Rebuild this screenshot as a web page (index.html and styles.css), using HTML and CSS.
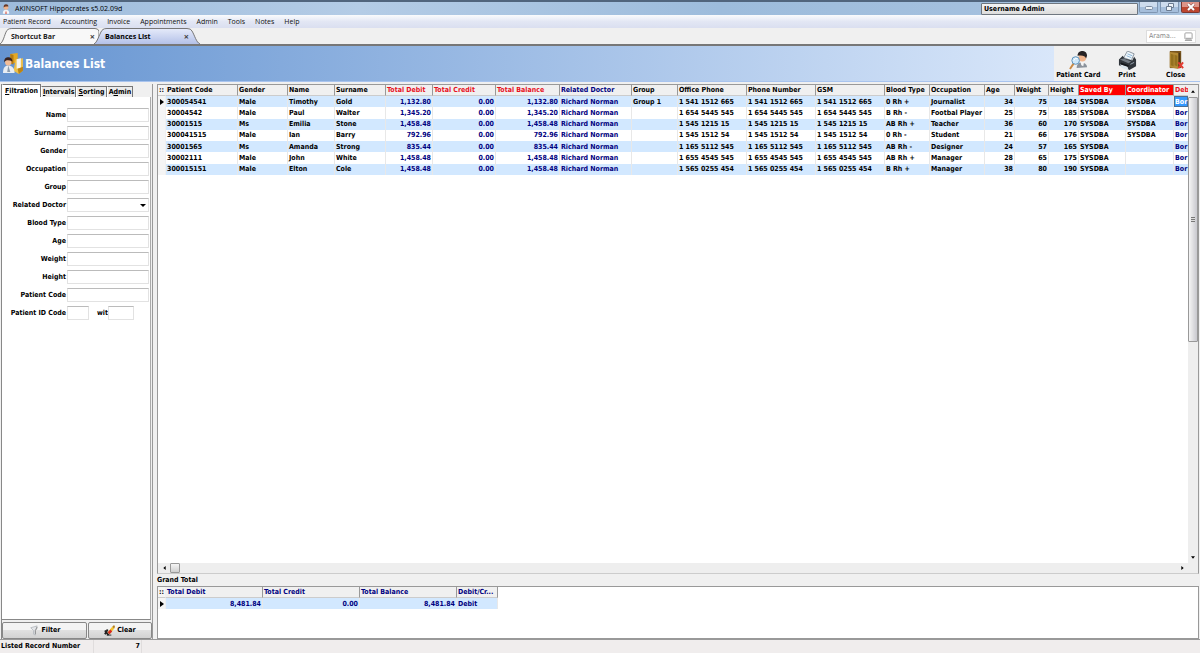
FILE: index.html
```
<!DOCTYPE html>
<html lang="en">
<head>
    <meta charset="UTF-8">
    <meta name="viewport" content="width=device-width, initial-scale=1.0">
    <title>AKINSOFT Hippocrates s5.02.09d</title>
    <link rel="stylesheet" href="styles.css">
</head>
<body>
    <header class="titlebar">
        <svg class="app-icon" viewBox="0 0 10 12">
            <path d="M1 12c0-4 2-5 4-5s4 1 4 5z" fill="#f4f6f8"/>
            <circle cx="5" cy="4" r="3" fill="#f0b48c"/>
            <path d="M2 4c0-3 1-4 3-4s3 1 3 3c-2 0-4-1-6 1z" fill="#6b3a26"/>
            <path d="M5 8l-1 4h2z" fill="#d8432e"/>
        </svg>
        <h1 class="app-title">AKINSOFT Hippocrates s5.02.09d</h1>
        <div class="user-box">Username Admin</div>
        <div class="window-buttons">
            <button class="win-btn" aria-label="Minimize"><svg viewBox="0 0 10 8"><rect x="1.500" y="3.500" width="7" height="3" rx="1" fill="#eef3f8" stroke="#7b8ba0"/></svg></button>
            <button class="win-btn" aria-label="Restore"><svg viewBox="0 0 10 8"><path d="M3.500 .5h5v4h-5z" fill="#eef3f8" stroke="#6b7b90"/><path d="M1.500 3.500h5v4h-5z" fill="#eef3f8" stroke="#6b7b90"/></svg></button>
            <button class="win-btn win-close" aria-label="Close window"><svg viewBox="0 0 10 8"><path d="M2 1l6 6M8 1l-6 6" stroke="#8b4a46" stroke-width="3"/><path d="M2 1l6 6M8 1l-6 6" stroke="#fff" stroke-width="2"/></svg></button>
        </div>
    </header>

    <nav class="menu">
        <a href="#">Patient Record</a>
        <a href="#">Accounting</a>
        <a href="#">Invoice</a>
        <a href="#">Appointments</a>
        <a href="#">Admin</a>
        <a href="#">Tools</a>
        <a href="#">Notes</a>
        <a href="#">Help</a>
    </nav>

    <div class="tabbar">
        <div class="doc-tab">
            <svg class="doc-shape" viewBox="0 0 100 16" preserveAspectRatio="none"><path class="shape" d="M0 16C4 14 5 3 8 1.500Q9 .5 12 .5H96Q99 .5 100 3V16"/></svg>
            <button class="doc-name">Shortcut Bar</button>
            <button class="doc-close" aria-label="Close Shortcut Bar">×</button>
        </div>
        <div class="doc-tab active">
            <svg class="doc-shape" viewBox="0 0 106 16" preserveAspectRatio="none">
                <defs><linearGradient id="tabFill" x1="0" y1="0" x2="0" y2="1"><stop offset="0" stop-color="#e6ebfa"/><stop offset="1" stop-color="#b4c1e8"/></linearGradient></defs>
                <path class="shape" d="M0 16C4 14 6 3 9 1.500Q10 .5 13 .5H93Q97 .5 98 3C101 8 102 14 106 16"/>
            </svg>
            <button class="doc-name">Balances List</button>
            <button class="doc-close" aria-label="Close Balances List">×</button>
        </div>
        <div class="search">
            <input type="text" placeholder="Arama..." aria-label="Search">
            <svg viewBox="0 0 10 10"><rect x="1" y="1" width="8" height="7" rx="1" fill="#fff" stroke="#999"/><path d="M2 7h6M1 9.500h8" stroke="#999"/></svg>
        </div>
    </div>

    <div class="banner">
        <svg class="banner-icon" viewBox="0 0 20 20">
            <path d="M7 1l7-1v9l-7 1z" fill="#e5a823"/>
            <path d="M7 1l3 1v9l-3-1z" fill="#b57a12"/>
            <path d="M12 6l7-1v12l-4 3-5-3z" fill="#edc04b"/>
            <path d="M13 6l4-1v9l-4 1z" fill="#f4f4f0"/>
            <path d="M14 15l5-2v4l-4 3z" fill="#bc8314"/>
            <path d="M0 19c0-5 2-7 5-7s6 2 6 7z" fill="#e8edf3"/>
            <path d="M5 12l-1 6h3z" fill="#8b9cae"/>
            <circle cx="5" cy="9" r="3" fill="#f2bd98"/>
            <path d="M1 9c0-4 2-5 4-5s4 1 4 4c-3-1-6-2-8 1z" fill="#3a2420"/>
        </svg>
        <h2 class="banner-title">Balances List</h2>
        <div class="toolbar">
            <button class="tool">
                <svg viewBox="0 0 20 20">
                    <path d="M8 18c0-4 2-6 5-6s6 2 6 5z" fill="#8b929b"/>
                    <path d="M12 11h4l-1 5-2-1z" fill="#f5f5f5"/>
                    <circle cx="14" cy="7" r="4" fill="#f0b58d"/>
                    <path d="M9 5c0-4 3-5 5-5s5 1 5 5l-1 3c-1-3-4-4-9-3z" fill="#272324"/>
                    <path d="M5 13l-4 6" stroke="#c98a45" stroke-width="2"/>
                    <circle cx="7" cy="10" r="4" fill="#cfe8fa" stroke="#5a8fb8"/>
                    <path d="M5 10q1-3 4-2" stroke="#fff" fill="none"/>
                </svg>
                Patient Card
            </button>
            <button class="tool">
                <svg viewBox="0 0 20 20">
                    <path d="M10 0l7 3-3 7-8-3z" fill="#eef5fa" stroke="#8a949d"/>
                    <path d="M10 3l5 2M9 5l5 2" stroke="#89b3d6"/>
                    <path d="M1 9l4-4 2 3 8 2 2-4 2 3v7l-7 4-11-5z" fill="#30353b"/>
                    <path d="M2 9l4-1 8 3-3 2z" fill="#737b84"/>
                    <path d="M2 14l8 2 1 4-7-2z" fill="#dce5ec"/>
                    <path d="M3 13l8 3" stroke="#15181c" stroke-width="2"/>
                    <path d="M13 14l4-2" stroke="#9aa7b3"/>
                </svg>
                Print
            </button>
            <button class="tool">
                <svg viewBox="0 0 20 20">
                    <path d="M4 0h12v18H4z" fill="#7a561f"/>
                    <path d="M12 2h3v15h-3z" fill="#4a3213"/>
                    <path d="M4 1l9 1v17l-9-2z" fill="#b48a36"/>
                    <path d="M5 3l3 1v12l-3-1zM9 4l3 1v11l-3-1z" fill="#94701f"/>
                    <path d="M13 12l5 6M18 12l-5 6" stroke="#e33a30" stroke-width="2"/>
                </svg>
                Close
            </button>
        </div>
    </div>

    <main class="content">
        <aside class="sidebar">
            <div class="side-tabs">
                <button class="side-tab selected"><u>F</u>iltration</button>
                <button class="side-tab"><u>I</u>ntervals</button>
                <button class="side-tab"><u>S</u>orting</button>
                <button class="side-tab">A<u>d</u>min</button>
            </div>
            <form class="filters" id="filters">
                <div class="field"><label for="name">Name</label><input type="text" id="name"></div>
                <div class="field"><label for="surname">Surname</label><input type="text" id="surname"></div>
                <div class="field"><label for="gender">Gender</label><input type="text" id="gender"></div>
                <div class="field"><label for="occupation">Occupation</label><input type="text" id="occupation"></div>
                <div class="field"><label for="group">Group</label><input type="text" id="group"></div>
                <div class="field select-field"><label for="doctor">Related Doctor</label><select id="doctor"><option></option><option>Richard Norman</option></select></div>
                <div class="field"><label for="blood">Blood Type</label><input type="text" id="blood"></div>
                <div class="field"><label for="age">Age</label><input type="text" id="age"></div>
                <div class="field"><label for="weight">Weight</label><input type="text" id="weight"></div>
                <div class="field"><label for="height">Height</label><input type="text" id="height"></div>
                <div class="field"><label for="code">Patient Code</label><input type="text" id="code"></div>
                <div class="field range"><label for="idfrom">Patient ID Code</label><input type="text" id="idfrom"><label class="with" for="idto">wit</label><input type="text" id="idto"></div>
            </form>
            <div class="side-buttons">
                <button class="action">
                    <svg viewBox="0 0 12 12"><path d="M3 3l7-2-2 5v5l-2-1V6z" fill="#e5e7ea" stroke="#b8bcc2"/><path d="M9 2l1 1-2 3v4" stroke="#888" fill="none"/></svg>
                    Filter
                </button>
                <button class="action">
                    <svg viewBox="0 0 12 12"><path d="M1 6l4 5M4 5l-3 5" stroke="#222" stroke-width="2"/><path d="M4 8l5-6 2 2-5 6z" fill="#f4c52c"/><path d="M4 8l3-3 2 2-3 3z" fill="#d62b22"/><path d="M9 2l2-2 1 2-1 2z" fill="#b7801c"/><path d="M3 11h5" stroke="#222"/></svg>
                    Clear
                </button>
            </div>
        </aside>

        <section class="workspace">
            <div class="grid-box">
                <div class="grid-view">
                    <table class="grid patients">
                        <colgroup>
                            <col class="w-mark"><col class="w-code"><col class="w-gender"><col class="w-name"><col class="w-surname">
                            <col class="w-debit"><col class="w-credit"><col class="w-balance"><col class="w-doctor"><col class="w-group">
                            <col class="w-phone"><col class="w-phone"><col class="w-phone"><col class="w-blood"><col class="w-occupation">
                            <col class="w-age"><col class="w-weight"><col class="w-height"><col class="w-saved"><col class="w-coordinator"><col>
                        </colgroup>
                        <thead>
                            <tr>
                                <th class="mark">::</th>
                                <th>Patient Code</th><th>Gender</th><th>Name</th><th>Surname</th>
                                <th class="red">Total Debit</th><th class="red">Total Credit</th><th class="red">Total Balance</th>
                                <th class="navy">Related Doctor</th><th>Group</th><th>Office Phone</th><th>Phone Number</th><th>GSM</th>
                                <th>Blood Type</th><th>Occupation</th><th>Age</th><th>Weight</th><th>Height</th>
                                <th class="filled">Saved By</th><th class="filled">Coordinator</th><th class="red last">Deb</th>
                            </tr>
                        </thead>
                        <tbody>
                            <tr><td class="mark current"></td><td>300054541</td><td>Male</td><td>Timothy</td><td>Gold</td><td class="num navy">1,132.80</td><td class="num navy">0.00</td><td class="num navy">1,132.80</td><td class="navy">Richard Norman</td><td>Group 1</td><td>1 541 1512 665</td><td>1 541 1512 665</td><td>1 541 1512 665</td><td>0 Rh +</td><td>Journalist</td><td class="num">34</td><td class="num">75</td><td class="num">184</td><td>SYSDBA</td><td>SYSDBA</td><td class="last cell-selected">Bor</td></tr>
                            <tr><td class="mark"></td><td>30004542</td><td>Male</td><td>Paul</td><td>Walter</td><td class="num navy">1,345.20</td><td class="num navy">0.00</td><td class="num navy">1,345.20</td><td class="navy">Richard Norman</td><td></td><td>1 654 5445 545</td><td>1 654 5445 545</td><td>1 654 5445 545</td><td>B Rh -</td><td>Footbal Player</td><td class="num">25</td><td class="num">75</td><td class="num">185</td><td>SYSDBA</td><td>SYSDBA</td><td class="last navy">Bor</td></tr>
                            <tr><td class="mark"></td><td>30001515</td><td>Ms</td><td>Emilia</td><td>Stone</td><td class="num navy">1,458.48</td><td class="num navy">0.00</td><td class="num navy">1,458.48</td><td class="navy">Richard Norman</td><td></td><td>1 545 1215 15</td><td>1 545 1215 15</td><td>1 545 1215 15</td><td>AB Rh +</td><td>Teacher</td><td class="num">36</td><td class="num">60</td><td class="num">170</td><td>SYSDBA</td><td>SYSDBA</td><td class="last navy">Bor</td></tr>
                            <tr><td class="mark"></td><td>300041515</td><td>Male</td><td>Ian</td><td>Barry</td><td class="num navy">792.96</td><td class="num navy">0.00</td><td class="num navy">792.96</td><td class="navy">Richard Norman</td><td></td><td>1 545 1512 54</td><td>1 545 1512 54</td><td>1 545 1512 54</td><td>0 Rh -</td><td>Student</td><td class="num">21</td><td class="num">66</td><td class="num">176</td><td>SYSDBA</td><td>SYSDBA</td><td class="last navy">Bor</td></tr>
                            <tr><td class="mark"></td><td>30001565</td><td>Ms</td><td>Amanda</td><td>Strong</td><td class="num navy">835.44</td><td class="num navy">0.00</td><td class="num navy">835.44</td><td class="navy">Richard Norman</td><td></td><td>1 165 5112 545</td><td>1 165 5112 545</td><td>1 165 5112 545</td><td>AB Rh -</td><td>Designer</td><td class="num">24</td><td class="num">57</td><td class="num">165</td><td>SYSDBA</td><td></td><td class="last navy">Bor</td></tr>
                            <tr><td class="mark"></td><td>30002111</td><td>Male</td><td>John</td><td>White</td><td class="num navy">1,458.48</td><td class="num navy">0.00</td><td class="num navy">1,458.48</td><td class="navy">Richard Norman</td><td></td><td>1 655 4545 545</td><td>1 655 4545 545</td><td>1 655 4545 545</td><td>AB Rh +</td><td>Manager</td><td class="num">28</td><td class="num">65</td><td class="num">175</td><td>SYSDBA</td><td></td><td class="last navy">Bor</td></tr>
                            <tr><td class="mark"></td><td>300015151</td><td>Male</td><td>Elton</td><td>Cole</td><td class="num navy">1,458.48</td><td class="num navy">0.00</td><td class="num navy">1,458.48</td><td class="navy">Richard Norman</td><td></td><td>1 565 0255 454</td><td>1 565 0255 454</td><td>1 565 0255 454</td><td>B Rh +</td><td>Manager</td><td class="num">38</td><td class="num">80</td><td class="num">190</td><td>SYSDBA</td><td></td><td class="last navy">Bor</td></tr>
                        </tbody>
                    </table>
                </div>
                <div class="vscroll">
                    <button class="arrow" aria-label="Scroll up"><svg viewBox="0 0 5 3"><path d="M0 3l2.500-3L5 3z"/></svg></button>
                    <div class="track"><div class="thumb"></div></div>
                    <button class="arrow" aria-label="Scroll down"><svg viewBox="0 0 5 3"><path d="M0 0l2.500 3L5 0z"/></svg></button>
                </div>
                <div class="hscroll">
                    <button class="arrow" aria-label="Scroll left"><svg viewBox="0 0 3 5"><path d="M3 0L0 2.500 3 5z"/></svg></button>
                    <div class="track"><div class="thumb"></div></div>
                    <button class="arrow" aria-label="Scroll right"><svg viewBox="0 0 3 5"><path d="M0 0l3 2.500L0 5z"/></svg></button>
                </div>
            </div>

            <h3 class="total-title">Grand Total</h3>
            <div class="total-box">
                <table class="grid totals">
                    <colgroup><col class="w-mark"><col class="w-total"><col class="w-total"><col class="w-total"><col class="w-kind"></colgroup>
                    <thead>
                        <tr><th class="mark">::</th><th class="navy">Total Debit</th><th class="navy">Total Credit</th><th class="navy">Total Balance</th><th class="navy">Debit/Cr...</th></tr>
                    </thead>
                    <tbody>
                        <tr><td class="mark current"></td><td class="num navy">8,481.84</td><td class="num navy">0.00</td><td class="num navy">8,481.84</td><td class="navy">Debit</td></tr>
                    </tbody>
                </table>
            </div>
        </section>
    </main>

    <footer class="statusbar">
        <span class="status-label">Listed Record Number</span>
        <span class="status-count">7</span>
    </footer>
</body>
</html>
```
FILE: styles.css
```
* {
    margin: 0;
    padding: 0;
    box-sizing: border-box;
}

body {
    font-family: "DejaVu Sans Condensed", "DejaVu Sans", sans-serif;
    font-size: 7px;
    font-weight: bold;
    line-height: 11px;
    color: #000;
    background: #f0f0f0;
    min-height: 100vh;
    display: flex;
    flex-direction: column;
}

button, input, select {
    font: inherit;
    color: inherit;
    border: none;
    background: none;
    border-radius: 0;
}

button {
    white-space: nowrap;
}

svg {
    display: block;
    flex: none;
}

/* title bar */
.titlebar {
    display: flex;
    align-items: center;
    height: 15px;
    padding-left: 2px;
    border-top: 2px solid #51657d;
    background: linear-gradient(90deg, #9dbbdb, #b4cce6 30%, #9dbcdc 60%, #aac4e0);
}

.app-icon {
    width: 8px;
    height: 10px;
}

.app-title {
    flex: 1;
    padding-left: 5px;
    font-family: "Open Sans", sans-serif;
    font-size: 7px;
    font-weight: normal;
}

.user-box {
    width: 157px;
    height: 12px;
    padding-left: 2px;
    line-height: 10px;
    border: 1px solid #6f7780;
    border-radius: 1px;
    background: linear-gradient(#f4f4f4, #dcdcdc);
}

.window-buttons {
    display: flex;
    gap: 2px;
    margin-left: 1px;
    align-self: flex-start;
}

.win-btn {
    width: 19px;
    height: 11px;
    display: flex;
    align-items: center;
    justify-content: center;
    border: 1px solid #7f96b2;
    border-top: none;
    border-radius: 0 0 2px 2px;
    background: linear-gradient(#cddcee 50%, #a5bedb 50%);
}

.win-btn svg {
    width: 10px;
    height: 8px;
}

.win-close {
    border-color: #7a3630;
    background: linear-gradient(#dd9488 50%, #bd4630 50%);
}

/* menu */
.menu {
    display: flex;
    align-items: center;
    gap: 10px;
    height: 13px;
    padding-left: 3px;
    background: linear-gradient(#fafbfd, #e3e7f4 50%, #dadff0);
}

.menu a {
    font-family: "Open Sans", sans-serif;
    font-weight: normal;
    color: #111;
    text-decoration: none;
}

/* document tabs */
.tabbar {
    display: flex;
    align-items: flex-end;
    height: 18px;
    border-bottom: 2px solid #777;
}

.doc-tab {
    position: relative;
    display: flex;
    align-items: center;
    justify-content: space-between;
    width: 99px;
    height: 16px;
    padding: 0 4px 0 11px;
    font-family: "Open Sans", sans-serif;
    color: #222;
}

.doc-tab.active {
    width: 106px;
    margin-left: -5px;
    padding-right: 11px;
    color: #000;
}

.doc-shape {
    position: absolute;
    inset: 0;
    width: 100%;
    height: 100%;
}

.shape {
    fill: #f8f8f8;
    stroke: #777;
}

.active .shape {
    fill: url(#tabFill);
}

.doc-name, .doc-close {
    position: relative;
}

.doc-close {
    font-size: 9px;
    color: #444;
}

.search {
    display: flex;
    align-items: center;
    align-self: center;
    width: 50px;
    height: 13px;
    margin-left: auto;
    margin-right: 4px;
    padding: 0 2px;
    background: #fff;
    border: 1px solid #ddd;
}

.search input {
    flex: 1;
    min-width: 0;
    font-weight: normal;
}

.search input::placeholder {
    color: #888;
}

.search svg {
    width: 9px;
    height: 9px;
}

/* banner */
.banner {
    display: flex;
    align-items: center;
    height: 35px;
    padding-left: 3px;
    background: linear-gradient(90deg, #6594d1, #dce9fb 90%);
}

.banner-icon {
    width: 21px;
    height: 21px;
}

.banner-title {
    flex: 1;
    padding-left: 1px;
    font-size: 12px;
    line-height: 16px;
    color: #fff;
}

.toolbar {
    display: flex;
    align-self: stretch;
    width: 146px;
    background: #f0f0f0;
}

.tool {
    flex: 1;
    display: flex;
    flex-direction: column;
    align-items: center;
    justify-content: flex-end;
}

.tool svg {
    width: 19px;
    height: 19px;
}

/* main area */
.content {
    flex: 1;
    display: flex;
    gap: 4px;
    padding: 2px 1px 0 1px;
    border-top: 1px solid #a9c4ee;
    border-bottom: 1px solid #999;
}

.sidebar {
    width: 152px;
    flex: none;
    display: flex;
    flex-direction: column;
    border-left: 1px solid #888;
    border-right: 1px solid #999;
}

.side-tabs {
    display: flex;
    align-items: flex-end;
    height: 13px;
}

.side-tab {
    height: 11px;
    padding: 0 1px;
    border: 1px solid #777;
    border-left-color: #fff;
    border-bottom: none;
    background: #ececec;
}

.side-tab.selected {
    height: 13px;
    padding: 0 2px;
    background: #fff;
}

.filters {
    flex: 1;
    display: grid;
    grid-template-columns: minmax(0, 1fr);
    grid-auto-rows: 18px;
    align-content: start;
    padding: 9px 1px 0 0;
    margin-right: 1px;
    background: #fff;
    border-right: 1px solid #aaa;
    border-bottom: 1px solid #888;
}

.field {
    display: flex;
    align-items: center;
}

.field label {
    width: 65px;
    flex: none;
    padding-right: 1px;
    text-align: right;
    white-space: nowrap;
}

.field input, .field select {
    flex: 1;
    min-width: 0;
    height: 14px;
    background: #fff;
    border: 1px solid #e2e2e2;
    border-top-color: #bbb;
}

.field select {
    appearance: none;
}

.select-field {
    position: relative;
}

.select-field::after {
    content: '';
    position: absolute;
    right: 3px;
    top: 8px;
    border: 3px solid transparent;
    border-top-color: #000;
    border-bottom: none;
    pointer-events: none;
}

.range input {
    flex: none;
    width: 22px;
}

.range .with {
    width: 19px;
    padding-right: 0;
}

.range .with + input {
    width: 26px;
}

.side-buttons {
    display: flex;
    gap: 1px;
    padding: 2px 0 0;
}

.action {
    flex: 4;
    display: flex;
    align-items: center;
    justify-content: center;
    gap: 2px;
    height: 17px;
    border: 1px solid #888;
    border-radius: 2px;
    background: linear-gradient(#f4f4f4 50%, #e0e0e0 50%, #d2d2d2);
}

.action + .action {
    flex: 3;
}

.action svg {
    width: 11px;
    height: 11px;
}

/* right side */
.workspace {
    flex: 1;
    min-width: 0;
    display: flex;
    flex-direction: column;
}

.grid-box {
    flex: 1;
    display: grid;
    grid-template-columns: minmax(0, 1fr) 10px;
    grid-template-rows: minmax(0, 1fr) 10px;
    background: #fff;
    border: 1px solid #999;
    border-bottom-color: #ccc;
}

.grid-view {
    overflow: hidden;
}

.grid {
    table-layout: fixed;
    border-collapse: separate;
    border-spacing: 0;
}

.patients {
    width: 100%;
    height: 90px;
}

.totals {
    width: 340px;
}

.w-mark { width: 8px; }
.w-code { width: 72px; }
.w-gender { width: 50px; }
.w-name { width: 47px; }
.w-surname { width: 51px; }
.w-debit { width: 47px; }
.w-credit { width: 63px; }
.w-balance { width: 64px; }
.w-doctor { width: 72px; }
.w-group { width: 46px; }
.w-phone { width: 69px; }
.w-blood { width: 45px; }
.w-occupation { width: 55px; }
.w-age { width: 30px; }
.w-weight { width: 34px; }
.w-height { width: 30px; }
.w-saved { width: 47px; }
.w-coordinator { width: 48px; }
.w-total { width: 97px; }
.w-kind { width: 41px; }

.grid th, .grid td {
    height: 11px;
    padding: 0 1px;
    line-height: 10px;
    text-align: left;
    white-space: nowrap;
    border-right: 1px solid #e8e8e8;
}

.grid th {
    background: #f0f0f0;
    border-right-color: #999;
    border-bottom: 1px solid #ccc;
}

.grid tbody tr:nth-child(odd) {
    background: #d2e8ff;
}

.grid .num {
    text-align: right;
}

.grid .mark {
    background: #f5f5f5;
    border-right-color: #f0f0f0;
}

.grid .current::before {
    content: '';
    display: block;
    width: 0;
    margin-left: 1px;
    border: 3px solid transparent;
    border-left: 4px solid #000;
    border-right: none;
}

.grid .last {
    padding-right: 0;
    border-right: none;
}

.navy {
    color: #000080;
}

.red {
    color: #e8101c;
}

.grid .filled {
    color: #fff;
    background: #f00;
}

.grid .cell-selected {
    color: #fff;
    background: #3399ff;
    box-shadow: inset 0 0 0 1px #4a6f95;
}

/* scroll bars */
.vscroll, .hscroll {
    display: flex;
    background: #eee;
}

.vscroll {
    flex-direction: column;
}

.hscroll {
    grid-column: 1;
}

.grid-box::after {
    content: '';
    background: #eee;
}

.arrow {
    display: flex;
    align-items: center;
    justify-content: center;
    width: 10px;
    height: 12px;
}

.hscroll .arrow {
    width: 12px;
    height: 10px;
}

.vscroll svg {
    width: 4px;
    height: 3px;
}

.hscroll svg {
    width: 3px;
    height: 4px;
}

.track {
    flex: 1;
}

.thumb {
    border: 1px solid #999;
    border-radius: 1px;
    background: linear-gradient(90deg, #f5f5f5, #c8c8ce);
}

.vscroll .thumb {
    display: flex;
    align-items: center;
    justify-content: center;
    height: 54%;
}

.vscroll .thumb::before {
    content: '';
    width: 4px;
    height: 5px;
    background: repeating-linear-gradient(#777 0 1px, #ddd 1px 2px);
}

.hscroll .thumb {
    width: 10px;
    height: 10px;
    background: linear-gradient(#f5f5f5, #d0d0d0);
}

/* totals */
.total-title {
    font-size: 7px;
    line-height: 12px;
}

.total-box {
    height: 53px;
    background: #fff;
    border: 1px solid #999;
}

.statusbar {
    display: flex;
    height: 13px;
    padding-left: 1px;
    background: #f0eded;
}

.status-label {
    width: 93px;
    line-height: 13px;
    border-right: 1px solid #e0dddd;
}

.status-count {
    width: 48px;
    padding-right: 1px;
    line-height: 13px;
    text-align: right;
    border-right: 1px solid #e0dddd;
}
```
